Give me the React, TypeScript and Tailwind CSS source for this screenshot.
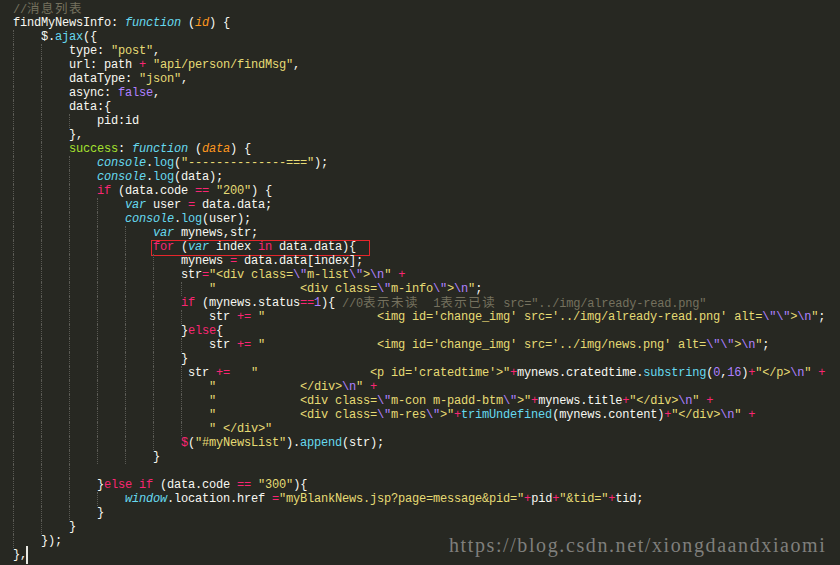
import React from 'react';

type Seg = [string, string];
type Line = { indent: number; segs: Seg[]; box?: boolean; cursor?: boolean };

const COLORS: Record<string, string> = {
  w: 'text-[#f8f8f2]',
  s: 'text-[#e6db74]',
  k: 'text-[#f92672]',
  f: 'text-[#66d9ef] italic',
  c: 'text-[#66d9ef]',
  p: 'text-[#fd971f] italic',
  n: 'text-[#ae81ff]',
  g: 'text-[#a6e22e]',
  m: 'text-[#75715e]',
};

const GUIDE_W: Record<number, string> = {
  1: 'w-[7px]',
  2: 'w-[14px]',
  3: 'w-[21px]',
  4: 'w-[28px]',
};

const ESC_Q: Seg = ['\\"', 'n'];
const NL: Seg = ['\\n', 'n'];

const lines: Line[] = [
  { indent: 0, segs: [['//消息列表', 'm']] },
  { indent: 0, segs: [['findMyNewsInfo: ', 'w'], ['function', 'f'], [' (', 'w'], ['id', 'p'], [') {', 'w']] },
  { indent: 4, segs: [['$.', 'w'], ['ajax', 'c'], ['({', 'w']] },
  { indent: 8, segs: [['type: ', 'w'], ['"post"', 's'], [',', 'w']] },
  { indent: 8, segs: [['url: path ', 'w'], ['+', 'k'], [' ', 'w'], ['"api/person/findMsg"', 's'], [',', 'w']] },
  { indent: 8, segs: [['dataType: ', 'w'], ['"json"', 's'], [',', 'w']] },
  { indent: 8, segs: [['async: ', 'w'], ['false', 'n'], [',', 'w']] },
  { indent: 8, segs: [['data:{', 'w']] },
  { indent: 12, segs: [['pid:id', 'w']] },
  { indent: 8, segs: [['},', 'w']] },
  { indent: 8, segs: [['success', 'g'], [': ', 'w'], ['function', 'f'], [' (', 'w'], ['data', 'p'], [') {', 'w']] },
  { indent: 12, segs: [['console', 'f'], ['.', 'w'], ['log', 'c'], ['(', 'w'], ['"--------------==="', 's'], [');', 'w']] },
  { indent: 12, segs: [['console', 'f'], ['.', 'w'], ['log', 'c'], ['(data);', 'w']] },
  { indent: 12, segs: [['if', 'k'], [' (data.code ', 'w'], ['==', 'k'], [' ', 'w'], ['"200"', 's'], [') {', 'w']] },
  { indent: 16, segs: [['var', 'f'], [' user ', 'w'], ['=', 'k'], [' data.data;', 'w']] },
  { indent: 16, segs: [['console', 'f'], ['.', 'w'], ['log', 'c'], ['(user);', 'w']] },
  { indent: 20, segs: [['var', 'f'], [' mynews,str;', 'w']] },
  {
    indent: 20,
    box: true,
    segs: [['for', 'k'], [' (', 'w'], ['var', 'f'], [' index ', 'w'], ['in', 'k'], [' data.data){', 'w']],
  },
  { indent: 24, segs: [['mynews ', 'w'], ['=', 'k'], [' data.data[index];', 'w']] },
  {
    indent: 24,
    segs: [['str', 'w'], ['=', 'k'], ['"<div class=', 's'], ESC_Q, ['m-list', 's'], ESC_Q, ['>', 's'], NL, ['"', 's'], [' ', 'w'], ['+', 'k']],
  },
  {
    indent: 28,
    segs: [['"            <div class=', 's'], ESC_Q, ['m-info', 's'], ESC_Q, ['>', 's'], NL, ['"', 's'], [';', 'w']],
  },
  {
    indent: 24,
    segs: [
      ['if', 'k'],
      [' (mynews.status', 'w'],
      ['==', 'k'],
      ['1', 'n'],
      ['){ ', 'w'],
      ['//0表示未读  1表示已读 src="../img/already-read.png"', 'm'],
    ],
  },
  {
    indent: 28,
    segs: [
      ['str ', 'w'],
      ['+=', 'k'],
      [' ', 'w'],
      ["\"                <img id='change_img' src='../img/already-read.png' alt=", 's'],
      ['\\"\\"', 'n'],
      ['>', 's'],
      NL,
      ['"', 's'],
      [';', 'w'],
    ],
  },
  { indent: 24, segs: [['}', 'w'], ['else', 'k'], ['{', 'w']] },
  {
    indent: 28,
    segs: [
      ['str ', 'w'],
      ['+=', 'k'],
      [' ', 'w'],
      ["\"                <img id='change_img' src='../img/news.png' alt=", 's'],
      ['\\"\\"', 'n'],
      ['>', 's'],
      NL,
      ['"', 's'],
      [';', 'w'],
    ],
  },
  { indent: 24, segs: [['}', 'w']] },
  {
    indent: 25,
    segs: [
      ['str ', 'w'],
      ['+=', 'k'],
      ['   ', 'w'],
      ["\"                <p id='cratedtime'>\"", 's'],
      ['+', 'k'],
      ['mynews.cratedtime.', 'w'],
      ['substring', 'c'],
      ['(', 'w'],
      ['0', 'n'],
      [',', 'w'],
      ['16', 'n'],
      [')', 'w'],
      ['+', 'k'],
      ['"</p>', 's'],
      NL,
      ['"', 's'],
      [' ', 'w'],
      ['+', 'k'],
    ],
  },
  { indent: 28, segs: [['"            </div>', 's'], NL, ['"', 's'], [' ', 'w'], ['+', 'k']] },
  {
    indent: 28,
    segs: [
      ['"            <div class=', 's'],
      ESC_Q,
      ['m-con m-padd-btm', 's'],
      ESC_Q,
      ['>"', 's'],
      ['+', 'k'],
      ['mynews.title', 'w'],
      ['+', 'k'],
      ['"</div>', 's'],
      NL,
      ['"', 's'],
      [' ', 'w'],
      ['+', 'k'],
    ],
  },
  {
    indent: 28,
    segs: [
      ['"            <div class=', 's'],
      ESC_Q,
      ['m-res', 's'],
      ESC_Q,
      ['>"', 's'],
      ['+', 'k'],
      ['trimUndefined', 'c'],
      ['(mynews.content)', 'w'],
      ['+', 'k'],
      ['"</div>', 's'],
      NL,
      ['"', 's'],
      [' ', 'w'],
      ['+', 'k'],
    ],
  },
  { indent: 28, segs: [['" </div>"', 's']] },
  { indent: 24, segs: [['$', 'k'], ['(', 'w'], ['"#myNewsList"', 's'], [').', 'w'], ['append', 'c'], ['(str);', 'w']] },
  { indent: 20, segs: [['}', 'w']] },
  { indent: 12, segs: [] },
  {
    indent: 12,
    segs: [['}', 'w'], ['else', 'k'], [' ', 'w'], ['if', 'k'], [' (data.code ', 'w'], ['==', 'k'], [' ', 'w'], ['"300"', 's'], ['){', 'w']],
  },
  {
    indent: 16,
    segs: [
      ['window', 'f'],
      ['.location.href ', 'w'],
      ['=', 'k'],
      ['"myBlankNews.jsp?page=message&pid="', 's'],
      ['+', 'k'],
      ['pid', 'w'],
      ['+', 'k'],
      ['"&tid="', 's'],
      ['+', 'k'],
      ['tid;', 'w'],
    ],
  },
  { indent: 12, segs: [['}', 'w']] },
  { indent: 8, segs: [['}', 'w']] },
  { indent: 4, segs: [['});', 'w']] },
  { indent: 0, segs: [['},', 'w']], cursor: true },
];

// CJK glyphs are two columns wide in the editor
function renderText(text: string) {
  return text.split(/([\u4e00-\u9fff]+)/).map((part, i) =>
    /[\u4e00-\u9fff]/.test(part) ? (
      <span key={i} className="font-['Noto_Sans_CJK_SC',sans-serif] text-[12.5px] tracking-[1.5px] not-italic">
        {part}
      </span>
    ) : (
      part
    )
  );
}

function Guides({ indent }: { indent: number }) {
  const units: number[] = [];
  for (let c = 0; c < indent; c += 4) units.push(Math.min(4, indent - c));
  return (
    <>
      {units.map((u, i) => (
        <span key={i} className={`inline-block h-[14px] shrink-0 border-l border-dotted border-[#5a5a54] ${GUIDE_W[u]}`} />
      ))}
    </>
  );
}

function CodeLine({ line }: { line: Line }) {
  return (
    <div className="relative flex h-[14px] items-center whitespace-pre">
      <Guides indent={line.indent} />
      {line.segs.map(([t, k], i) => (
        <span key={i} className={COLORS[k]}>
          {renderText(t)}
        </span>
      ))}
      {line.cursor && <span className="-ml-[1px] inline-block h-[18px] w-[2px] shrink-0 bg-[#e8e8e2]" />}
      {line.box && (
        <div className="absolute left-[138px] top-0 h-[16px] w-[219px] border border-[#e5262b]" />
      )}
    </div>
  );
}

export default function App() {
  return (
    <div className="relative h-[565px] w-[840px] overflow-hidden bg-[#272822] pl-[13px] pt-[2px] font-['Liberation_Mono',monospace] text-[12px] leading-[14px] tracking-[-0.2px] text-[#f8f8f2]">
      {lines.map((line, i) => (
        <CodeLine key={i} line={line} />
      ))}
      <div className="absolute left-[449px] top-[535px] font-['Liberation_Serif',serif] text-[20px] leading-none tracking-[1.6px] text-[#7f7f7c]">
        https://blog.csdn.net/xiongdaandxiaomi
      </div>
    </div>
  );
}
